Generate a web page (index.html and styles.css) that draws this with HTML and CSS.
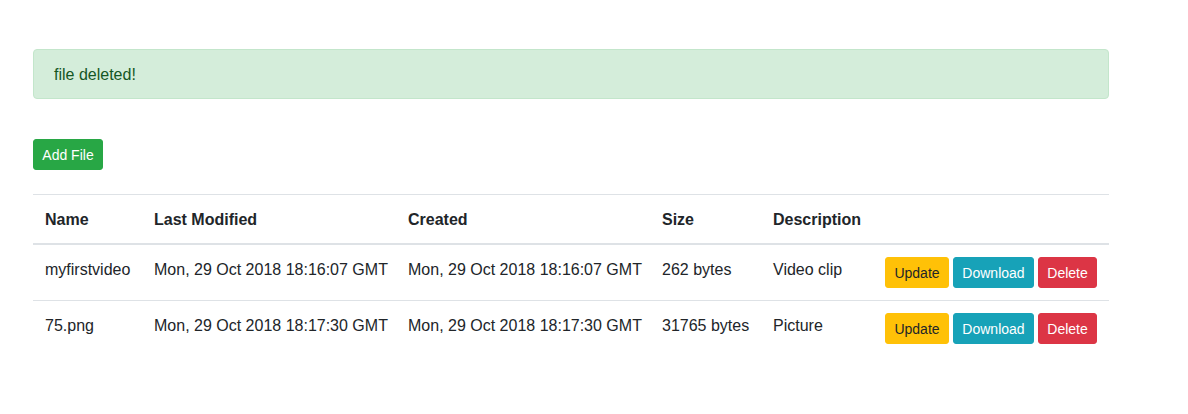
FILE: index.html
```html
<!DOCTYPE html>
<html>
<head>
<meta charset="utf-8">
<link rel="stylesheet" href="styles.css">
</head>
<body>
<div class="page">
  <div class="alert">file deleted!</div>
  <div class="toolbar"><button class="btn btn-success">Add File</button></div>
  <table class="table">
    <colgroup>
      <col class="c-name"><col class="c-mod"><col class="c-created"><col class="c-size"><col class="c-desc"><col class="c-actions">
    </colgroup>
    <thead>
      <tr><th>Name</th><th>Last Modified</th><th>Created</th><th>Size</th><th>Description</th><th></th></tr>
    </thead>
    <tbody>
      <tr>
        <td>myfirstvideo</td>
        <td>Mon, 29 Oct 2018 18:16:07 GMT</td>
        <td>Mon, 29 Oct 2018 18:16:07 GMT</td>
        <td>262 bytes</td>
        <td>Video clip</td>
        <td class="actions-cell"><div class="actions"><button class="btn btn-warning">Update</button><button class="btn btn-info">Download</button><button class="btn btn-danger">Delete</button></div></td>
      </tr>
      <tr>
        <td>75.png</td>
        <td>Mon, 29 Oct 2018 18:17:30 GMT</td>
        <td>Mon, 29 Oct 2018 18:17:30 GMT</td>
        <td>31765 bytes</td>
        <td>Picture</td>
        <td class="actions-cell"><div class="actions"><button class="btn btn-warning">Update</button><button class="btn btn-info">Download</button><button class="btn btn-danger">Delete</button></div></td>
      </tr>
    </tbody>
  </table>
</div>
</body>
</html>
```

FILE: styles.css
```css
html, body {
  margin: 0;
  padding: 0;
  background: #fff;
}
body {
  font-family: "Liberation Sans", Arial, sans-serif;
  font-size: 16px;
  line-height: 24px;
  color: #212529;
}
.page {
  width: 1076px;
  padding: 49px 0 0 33px;
}
.alert {
  background: #d4edda;
  border: 1px solid #c3e6cb;
  color: #155724;
  border-radius: 4px;
  padding: 13px 20px 11px;
  margin: 0 0 40px 0;
  height: 24px;
}
.toolbar {
  margin-bottom: 24px;
  display: flex;
}
.btn {
  box-sizing: border-box;
  font-family: "Liberation Sans", Arial, sans-serif;
  font-size: 14px;
  line-height: 21px;
  padding: 5px 0 3px;
  border: 1px solid transparent;
  border-radius: 3px;
  cursor: pointer;
  height: 31px;
  text-align: center;
}
.btn-success { background: #28a745; border-color: #28a745; color: #fff; width: 70px; }
.btn-warning { background: #ffc107; border-color: #ffc107; color: #212529; width: 64px; }
.btn-info { background: #17a2b8; border-color: #17a2b8; color: #fff; width: 81px; }
.btn-danger { background: #dc3545; border-color: #dc3545; color: #fff; width: 59px; }
.table {
  width: 1076px;
  border-collapse: collapse;
  table-layout: fixed;
}
.c-name { width: 109px; }
.c-mod { width: 254px; }
.c-created { width: 254px; }
.c-size { width: 111px; }
.c-desc { width: 112px; }
.c-actions { width: 236px; }
.table th, .table td {
  padding: 13px 12px 11px;
  border-top: 1px solid #dee2e6;
  text-align: left;
  vertical-align: top;
  white-space: nowrap;
}
.table td.actions-cell {
  padding: 12px;
}
.table thead th {
  font-weight: bold;
  border-bottom: 2px solid #dee2e6;
}
.actions {
  display: flex;
  gap: 4px;
}
```
